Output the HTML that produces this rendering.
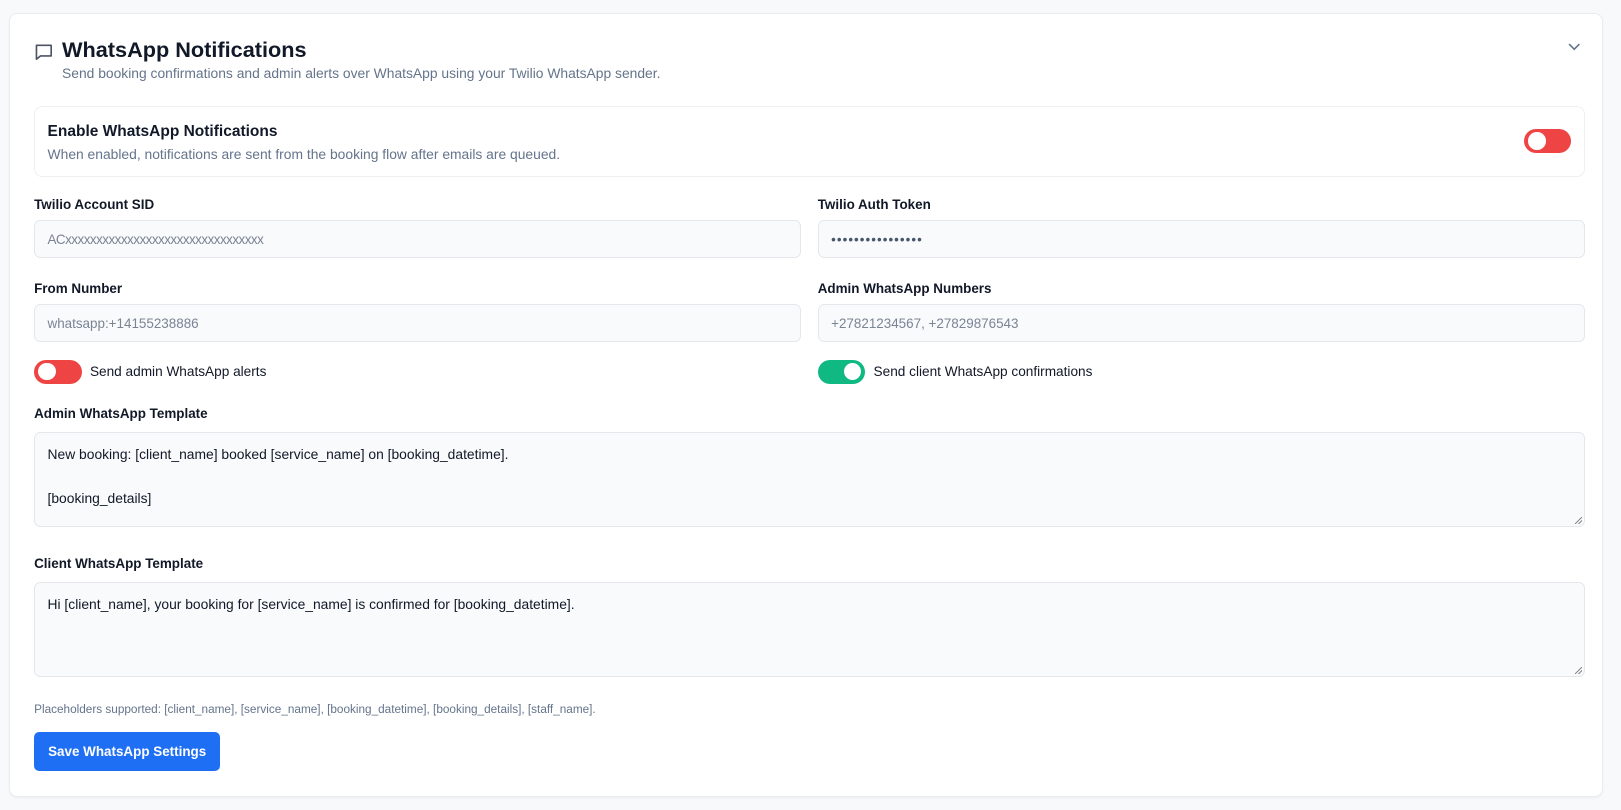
<!DOCTYPE html>
<html><head><meta charset="utf-8"><style>
html,body{margin:0;padding:0;background:#f8f9fb;width:1621px;height:810px;overflow:hidden}
body{font-family:"Liberation Sans",sans-serif;color:#111827}
#w{zoom:1.0338;position:relative;width:1568px;height:784px}
.card{position:absolute;left:9px;top:13px;width:1540px;height:756px;background:#fff;border:1px solid #e9ecf0;border-radius:8px;box-shadow:0 1px 2px rgba(0,0,0,.04)}
.a{position:absolute}
.lbl{font-size:13px;font-weight:bold;color:#111827}
.in{position:absolute;height:37px;background:#f8fafc;border:1px solid #e5e7eb;border-radius:6px;box-sizing:border-box;padding:0 12px;line-height:36px;font-size:13px;color:#7b8494}
.ta{position:absolute;background:#f8fafc;border:1px solid #e5e7eb;border-radius:6px;box-sizing:border-box;padding:11px 12px;font-size:13.4px;line-height:21px;color:#111827}
.ta:after{content:"";position:absolute;right:2px;bottom:2px;width:7px;height:7px;background:linear-gradient(135deg,transparent 45%,#888 45%,#888 55%,transparent 55%,transparent 70%,#888 70%,#888 80%,transparent 80%)}
.tg{position:absolute;width:46px;height:23px;border-radius:12px}
.tg i{position:absolute;top:3px;width:17px;height:17px;border-radius:50%;background:#fff}
</style></head><body><div id="w">
<div class="card"></div>
<svg class="a" style="left:33px;top:41px" width="19" height="19" viewBox="0 0 24 24" fill="none" stroke="#4b5563" stroke-width="2" stroke-linejoin="round"><path d="M3 4h18v13H8l-5 4z"/></svg>
<div class="a" style="left:60px;top:36px;font-size:21px;font-weight:bold;color:#111827">WhatsApp Notifications</div>
<div class="a" style="left:60px;top:63px;font-size:13.4px;color:#64748b">Send booking confirmations and admin alerts over WhatsApp using your Twilio WhatsApp sender.</div>
<svg class="a" style="left:1516px;top:41px" width="14" height="10" viewBox="0 0 14 10" fill="none" stroke="#64748b" stroke-width="1.5"><path d="M2 2l5 5 5-5"/></svg>
<div class="a" style="left:33px;top:103px;width:1498px;height:66px;border:1px solid #edf0f3;border-radius:8px"></div>
<div class="a" style="left:46px;top:119px;font-size:15px;font-weight:bold">Enable WhatsApp Notifications</div>
<div class="a" style="left:46px;top:141px;font-size:13.4px;color:#64748b">When enabled, notifications are sent from the booking flow after emails are queued.</div>
<div class="tg" style="left:1474px;top:125px;background:#ef4444"><i style="left:4px"></i></div>
<div class="a lbl" style="left:33px;top:191px">Twilio Account SID</div>
<div class="a lbl" style="left:791px;top:191px">Twilio Auth Token</div>
<div class="in" style="left:33px;top:213px;width:742px;letter-spacing:-0.5px">ACxxxxxxxxxxxxxxxxxxxxxxxxxxxxxxxx</div>
<div class="in" style="left:791px;top:213px;width:742px;color:#475569;letter-spacing:1px">••••••••••••••••</div>
<div class="a lbl" style="left:33px;top:272px">From Number</div>
<div class="a lbl" style="left:791px;top:272px">Admin WhatsApp Numbers</div>
<div class="in" style="left:33px;top:294px;width:742px">whatsapp:+14155238886</div>
<div class="in" style="left:791px;top:294px;width:742px">+27821234567, +27829876543</div>
<div class="tg" style="left:33px;top:348px;background:#ef4444"><i style="left:4px"></i></div>
<div class="a" style="left:87px;top:352px;font-size:13.2px">Send admin WhatsApp alerts</div>
<div class="tg" style="left:791px;top:348px;background:#10b981"><i style="left:25px"></i></div>
<div class="a" style="left:845px;top:352px;font-size:13.2px">Send client WhatsApp confirmations</div>
<div class="a lbl" style="left:33px;top:393px">Admin WhatsApp Template</div>
<div class="ta" style="left:33px;top:418px;width:1500px;height:92px">New booking: [client_name] booked [service_name] on [booking_datetime].<br><br>[booking_details]</div>
<div class="a lbl" style="left:33px;top:538px">Client WhatsApp Template</div>
<div class="ta" style="left:33px;top:563px;width:1500px;height:92px">Hi [client_name], your booking for [service_name] is confirmed for [booking_datetime].</div>
<div class="a" style="left:33px;top:680px;font-size:11.4px;color:#64748b">Placeholders supported: [client_name], [service_name], [booking_datetime], [booking_details], [staff_name].</div>
<div class="a" style="left:33px;top:708px;width:180px;height:38px;background:#1f6ff5;border-radius:5px;color:#fff;font-size:13px;font-weight:bold;text-align:center;line-height:38px">Save WhatsApp Settings</div>
</div></body></html>
